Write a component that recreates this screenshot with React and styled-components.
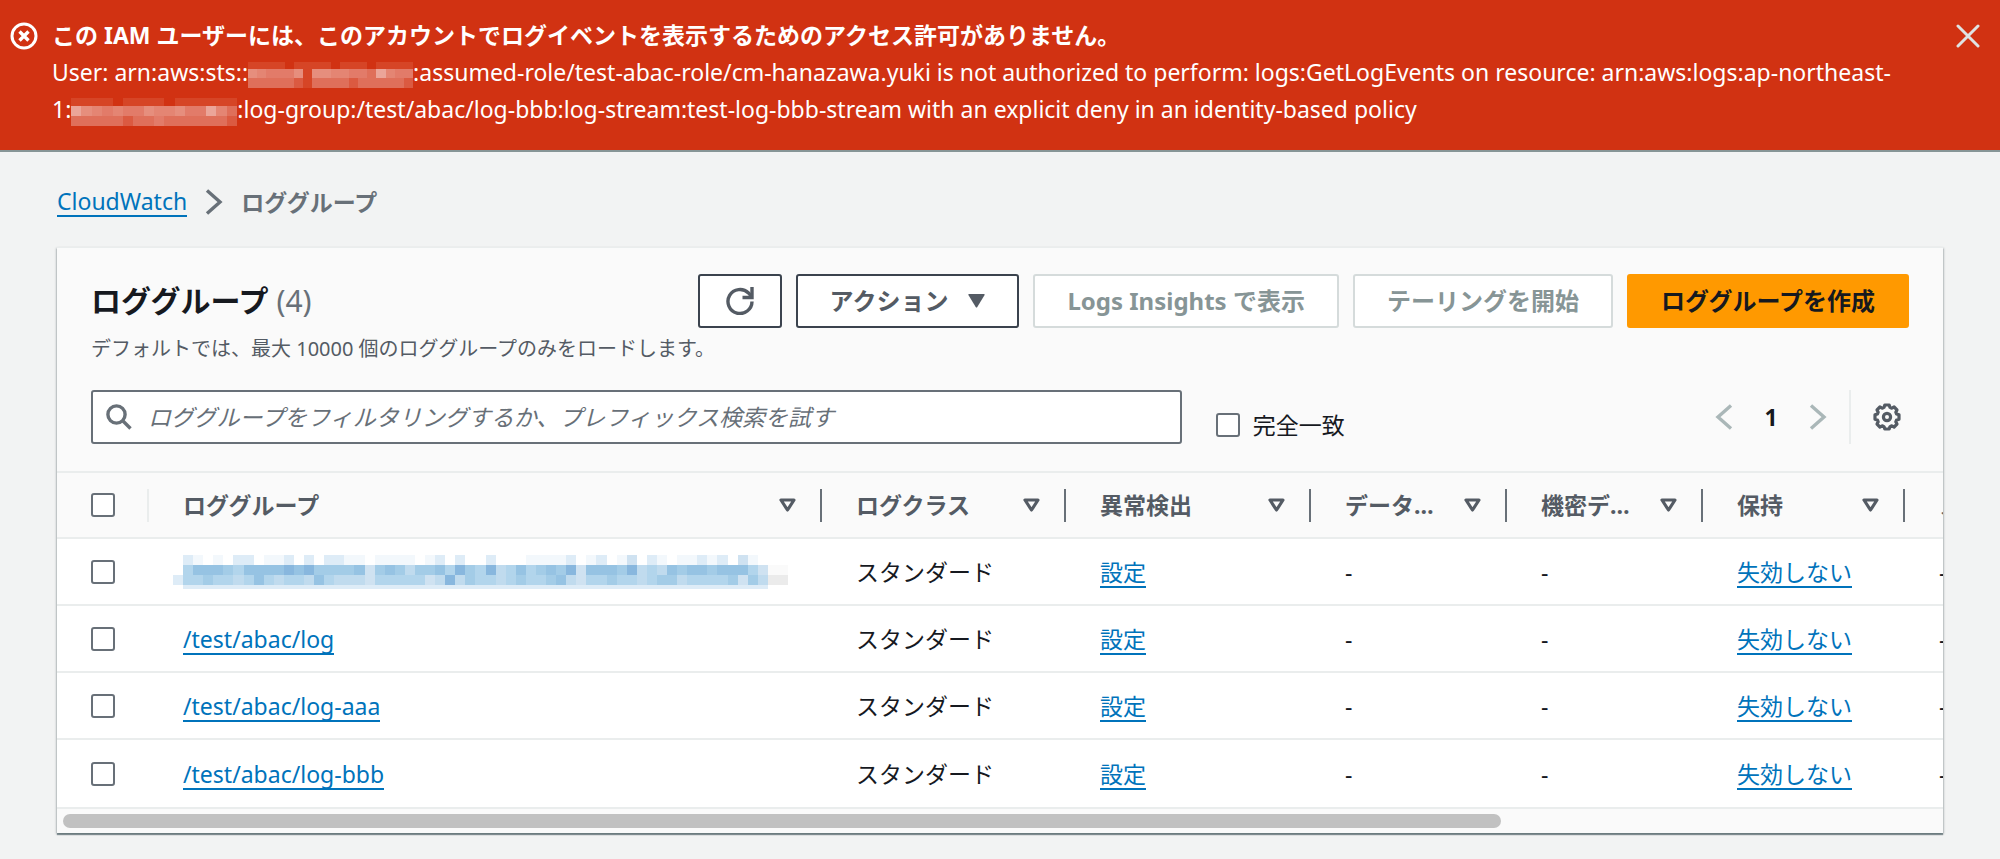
import React from "react";
import styled, { createGlobalStyle } from "styled-components";

const GlobalStyle = createGlobalStyle`
  * {
    box-sizing: border-box;
  }
  body {
    margin: 0;
    background: #f2f3f3;
    color: #16191f;
    font-family: "Noto Sans", "Noto Sans CJK JP", sans-serif;
    font-size: 23px;
    line-height: 36px;
  }
  button, input {
    font: inherit;
    color: inherit;
  }
  button {
    cursor: pointer;
  }
  svg {
    display: block;
    flex: none;
  }
`;

const Banner = styled.div`
  display: flex;
  align-items: flex-start;
  padding: 17px 8px 22px 10px;
  background: #d13212;
  color: #fff;
  line-height: 37px;
  border-bottom: 2px solid #879596;
`;

const BannerIcon = styled.div`
  display: flex;
  align-items: center;
  width: 42px;
  height: 37px;
`;

const BannerText = styled.div`
  flex: 1;
  padding-right: 30px;

  h2 {
    margin: 0;
    font-size: 23px;
    line-height: 37px;
    font-weight: 700;
  }
  p {
    margin: 0;
  }
  svg {
    display: inline-block;
    vertical-align: middle;
  }
`;

const IconButton = styled.button`
  display: flex;
  align-items: center;
  justify-content: center;
  width: ${(p) => p.$width || 48}px;
  height: ${(p) => p.$height || 37}px;
  padding: 0;
  border: none;
  background: none;
  color: ${(p) => p.$color || "#545b64"};
`;

const Page = styled.main`
  padding: 32px 57px 26px;
`;

const Breadcrumbs = styled.nav`
  display: flex;
  align-items: center;
  height: 36px;
  margin-bottom: 27px;
  gap: 18px;
  color: #687078;
`;

const Current = styled.span`
  font-weight: 700;
`;

const Link = styled.a`
  display: inline-block;
  line-height: 28px;
  color: #0073bb;
  text-decoration: none;
  border-bottom: 2px solid #0073bb;
`;

const Card = styled.section`
  background: #fafafa;
  border-top: 1px solid #eaeded;
  box-shadow: 0 2px 1px rgba(0, 28, 36, 0.4), 1px 1px 2px rgba(0, 28, 36, 0.2),
    -1px 1px 2px rgba(0, 28, 36, 0.2);
`;

const CardHeader = styled.header`
  padding: 26px 34px 27px;
`;

const TitleRow = styled.div`
  display: flex;
  justify-content: space-between;
  align-items: center;
`;

const Title = styled.h1`
  margin: 0;
  font-size: 30px;
  line-height: 52px;
  font-weight: 700;

  span {
    color: #687078;
    font-weight: 400;
  }
`;

const Actions = styled.div`
  display: flex;
  gap: 14px;
`;

const Button = styled.button`
  display: flex;
  align-items: center;
  gap: 20px;
  height: 54px;
  padding: 0 32px;
  border: 2px solid ${(p) => (p.$primary ? "#ff9900" : "#3b434e")};
  border-radius: 3px;
  background: ${(p) => (p.$primary ? "#ff9900" : "#fff")};
  color: ${(p) => (p.$primary ? "#16191f" : "#545b64")};
  font-size: 24px;
  font-weight: 700;
  white-space: nowrap;

  &:disabled {
    border-color: #d5dbdb;
    color: #879596;
    cursor: default;
  }
`;

const RefreshButton = styled(Button)`
  padding: 0 26px;
`;

const Description = styled.p`
  margin: 5px 0 25px;
  font-size: 20px;
  line-height: 32px;
  color: #545b64;
`;

const FilterRow = styled.div`
  display: flex;
  align-items: center;
`;

const SearchBox = styled.label`
  display: flex;
  align-items: center;
  gap: 16px;
  width: 60%;
  height: 54px;
  padding: 0 13px;
  border: 2px solid #687078;
  border-radius: 3px;
  background: #fff;
  color: #687078;
`;

const SearchInput = styled.input`
  flex: 1;
  min-width: 0;
  padding: 0;
  border: none;
  outline: none;
  background: none;

  &::placeholder {
    color: #687078;
    font-style: italic;
    opacity: 1;
  }
`;

const Checkbox = styled.input.attrs({ type: "checkbox" })`
  appearance: none;
  display: block;
  flex: none;
  width: 24px;
  height: 24px;
  margin: 0;
  border: 2px solid #687078;
  border-radius: 3px;
  background: #fff;
`;

const ExactMatch = styled.label`
  display: flex;
  align-items: center;
  gap: 13px;
  padding-top: 16px;
  margin-left: 34px;
`;

const Pager = styled.div`
  display: flex;
  align-items: center;
  margin-left: auto;
`;

const PageNumber = styled.button`
  width: 46px;
  padding: 0;
  border: none;
  background: none;
  font-weight: 700;
`;

const Settings = styled.div`
  display: flex;
  justify-content: flex-end;
  align-items: center;
  height: 54px;
  margin-left: 7px;
  padding: 0 0 0 14px;
  border-left: 2px solid #eaeded;
`;

const TableScroll = styled.div`
  overflow: hidden;
`;

const Table = styled.table`
  width: 130%;
  border-collapse: separate;
  border-spacing: 0;
  table-layout: fixed;
  border-top: 2px solid #eaeded;
`;

const Col = styled.col`
  width: ${(p) => p.$width}px;
`;

const HeadCell = styled.th`
  height: 66px;
  padding: 0;
  border-bottom: 2px solid #eaeded;
  color: #545b64;
  font-weight: 700;
  text-align: left;
`;

const HeadContent = styled.div`
  display: flex;
  align-items: center;
  height: 33px;
  padding: 0 24px 0 34px;
  border-right: 2px solid ${(p) => p.$line || "#687078"};

  span {
    flex: 1;
    min-width: 0;
    overflow: hidden;
    text-overflow: ellipsis;
    white-space: nowrap;
    line-height: 36px;
  }
`;

const SortButton = styled(IconButton)`
  margin-left: 20px;
`;

const Cell = styled.td`
  height: 67px;
  padding: 0 20px 0 34px;
  border-bottom: 2px solid #eaeded;
  background: #fff;
  white-space: nowrap;

  tr:last-child & {
    height: 69px;
  }
`;

const ScrollTrack = styled.div`
  padding: 5px 12px 5px 6px;
`;

const ScrollThumb = styled.div`
  width: 77%;
  height: 14px;
  border-radius: 7px;
  background: #c1c1c1;
`;

const BLUES = {
  1: "#f3f8fc",
  2: "#deecf7",
  3: "#cfe2f1",
  4: "#c0dbee",
  5: "#b2d5ec",
  6: "#a3cce7",
  7: "#96c3e3",
  8: "#88b7de",
  g: "#fafafa",
  G: "#ebebeb",
};

const WHITES = {
  1: "#d64526",
  2: "#d85030",
  3: "#db5a41",
  4: "#df6f5a",
  5: "#e27b69",
  6: "#e48573",
  7: "#e68e7d",
  8: "#eba599",
};

const NAME_MOSAIC = [
  "0210102201120202211011110120200200011112012013021011212031000",
  "05777657777878666673676466758658457567683777684547677677753gg",
  "25565545754554754443555553484655456556743556554566455556364GG",
  "0222222222222222222222222222222222222222222222222222222222200",
];

const ACCOUNT_A = ["111101111011101111", "765557177665548655", "444443144443444443"];
const ACCOUNT_B = ["1111011110111111", "8765655766755864", "4444434454444443"];

// masked identifiers, one character per block
function Mosaic({ rows, palette, width, heights }) {
  const cell = width / rows[0].length;
  const total = heights.reduce((a, b) => a + b, 0);
  let y = 0;
  return (
    <svg width={width} height={total} shapeRendering="crispEdges" aria-hidden="true">
      {rows.map((row, r) => {
        const top = y;
        y += heights[r];
        return row.split("").map((c, i) =>
          palette[c] ? (
            <rect
              key={r + "-" + i}
              x={i * cell}
              y={top}
              width={cell}
              height={heights[r]}
              fill={palette[c]}
            />
          ) : null
        );
      })}
    </svg>
  );
}

const MaskedName = styled.div`
  margin-left: -10px;
`;

const Chevron = ({ left }) => (
  <svg width="18" height="26" viewBox="0 0 18 26" fill="none" stroke="currentColor" strokeWidth="3.4">
    <path d={left ? "M16 1.5 3 13l13 11.5" : "M2 1.5 15 13 2 24.5"} />
  </svg>
);

const SortIcon = () => (
  <svg width="17" height="14" viewBox="0 0 17 14" fill="none" stroke="currentColor" strokeWidth="3.2" strokeLinejoin="round">
    <path d="M2 2h13l-6.500 10z" />
  </svg>
);

const columns = [
  { label: "ロググループ", width: 673 },
  { label: "ログクラス", width: 244 },
  { label: "異常検出", width: 245 },
  { label: "データ保護", width: 196 },
  { label: "機密データ数", width: 196 },
  { label: "保持", width: 202 },
  { label: "メトリクスフィルター" },
];

const groups = ["", "/test/abac/log", "/test/abac/log-aaa", "/test/abac/log-bbb"];

function Flash() {
  return (
    <Banner role="alert">
      <BannerIcon>
        <svg width="28" height="28" viewBox="0 0 28 28" fill="none" stroke="#fff" strokeWidth="3">
          <circle cx="14" cy="14" r="12" />
          <path d="m9.5 9.5 9 9m0-9-9 9" strokeWidth="3.4" />
        </svg>
      </BannerIcon>
      <BannerText>
        <h2>この IAM ユーザーには、このアカウントでログイベントを表示するためのアクセス許可がありません。</h2>
        <p>
          User: arn:aws:sts::
          <Mosaic rows={ACCOUNT_A} palette={WHITES} width={165} heights={[7, 9, 10]} />
          :assumed-role/test-abac-role/cm-hanazawa.yuki is not authorized to perform: logs:GetLogEvents on
          resource: arn:aws:logs:ap-northeast-
          <br />
          1:
          <Mosaic rows={ACCOUNT_B} palette={WHITES} width={166} heights={[8, 10, 10]} />
          :log-group:/test/abac/log-bbb:log-stream:test-log-bbb-stream with an explicit deny in an
          identity-based policy
        </p>
      </BannerText>
      <IconButton aria-label="閉じる" $color="#dfe3e3">
        <svg width="24" height="24" viewBox="0 0 24 24" fill="none" stroke="currentColor" strokeWidth="3" strokeLinecap="round">
          <path d="m2 2 20 20M22 2 2 22" />
        </svg>
      </IconButton>
    </Banner>
  );
}

function LogTable() {
  return (
    <TableScroll>
      <Table>
        <colgroup>
          <Col $width={92} />
          {columns.map((c) => (c.width ? <Col key={c.label} $width={c.width} /> : <col key={c.label} />))}
        </colgroup>
        <thead>
          <tr>
            <HeadCell>
              <HeadContent $line="#eaeded">
                <Checkbox aria-label="すべて選択" />
              </HeadContent>
            </HeadCell>
            {columns.map((c) => (
              <HeadCell key={c.label}>
                <HeadContent>
                  <span>{c.label}</span>
                  <SortButton $width={17} $height={33} aria-label="並べ替え">
                    <SortIcon />
                  </SortButton>
                </HeadContent>
              </HeadCell>
            ))}
          </tr>
        </thead>
        <tbody>
          {groups.map((name, i) => (
            <tr key={i}>
              <Cell>
                <Checkbox aria-label={name || "ロググループ"} />
              </Cell>
              <Cell>
                {name ? (
                  <Link href="#">{name}</Link>
                ) : (
                  <MaskedName>
                    <Mosaic rows={NAME_MOSAIC} palette={BLUES} width={615} heights={[10, 10, 10, 4]} />
                  </MaskedName>
                )}
              </Cell>
              <Cell>スタンダード</Cell>
              <Cell>
                <Link href="#">設定</Link>
              </Cell>
              <Cell>-</Cell>
              <Cell>-</Cell>
              <Cell>
                <Link href="#">失効しない</Link>
              </Cell>
              <Cell>-</Cell>
            </tr>
          ))}
        </tbody>
      </Table>
      <ScrollTrack>
        <ScrollThumb />
      </ScrollTrack>
    </TableScroll>
  );
}

export default function App() {
  return (
    <>
      <GlobalStyle />
      <Flash />
      <Page lang="ja">
        <Breadcrumbs>
          <Link href="#">CloudWatch</Link>
          <Chevron />
          <Current>ロググループ</Current>
        </Breadcrumbs>
        <Card>
          <CardHeader>
            <TitleRow>
              <Title>
                ロググループ <span>(4)</span>
              </Title>
              <Actions>
                <RefreshButton aria-label="更新">
                  <svg width="28" height="28" viewBox="0 0 28 28" fill="none" stroke="currentColor" strokeWidth="3.4">
                    <path d="M26 14.5A12 12 0 1 1 22.5 6l3 3.5" />
                    <path d="M26 0v10.5H16.5" />
                  </svg>
                </RefreshButton>
                <Button>
                  アクション
                  <svg width="17" height="14" viewBox="0 0 17 14" fill="currentColor">
                    <path d="M1 0h15q1 0 .6 1L9.3 13q-.8 1-1.6 0L.4 1Q0 0 1 0z" />
                  </svg>
                </Button>
                <Button disabled>Logs Insights で表示</Button>
                <Button disabled>テーリングを開始</Button>
                <Button $primary>ロググループを作成</Button>
              </Actions>
            </TitleRow>
            <Description>デフォルトでは、最大 10000 個のロググループのみをロードします。</Description>
            <FilterRow>
              <SearchBox>
                <svg width="26" height="26" viewBox="0 0 26 26" fill="none" stroke="currentColor" strokeWidth="3.4">
                  <circle cx="10.5" cy="10.5" r="8.6" />
                  <path d="m16.5 16.5 8 8" />
                </svg>
                <SearchInput
                  aria-label="ロググループを検索"
                  placeholder="ロググループをフィルタリングするか、プレフィックス検索を試す"
                />
              </SearchBox>
              <ExactMatch>
                <Checkbox />
                完全一致
              </ExactMatch>
              <Pager>
                <IconButton $color="#aab7b8" aria-label="前へ">
                  <Chevron left />
                </IconButton>
                <PageNumber>1</PageNumber>
                <IconButton $color="#aab7b8" aria-label="次へ">
                  <Chevron />
                </IconButton>
                <Settings>
                  <IconButton $width={44} aria-label="設定">
                    <svg width="28" height="28" viewBox="0 0 28 28" fill="none" stroke="currentColor" strokeWidth="3.2" strokeLinejoin="round">
                      <path d="M11.8 2h4.4l.8 2.400 1.800.8 2.300-1.200 2.900 2.900-1.200 2.300.8 1.800 2.400.8v4.400l-2.400.8-.8 1.800 1.200 2.300-2.900 2.900-2.300-1.200-1.800.8-.8 2.400h-4.400l-.8-2.400-1.800-.8-2.300 1.200L4 21.100l1.200-2.300-.8-1.800L2 16.200v-4.400l2.400-.8.8-1.800L4 6.900 6.900 4l2.300 1.200 1.800-.8z" />
                      <circle cx="14" cy="14" r="3.600" />
                    </svg>
                  </IconButton>
                </Settings>
              </Pager>
            </FilterRow>
          </CardHeader>
          <LogTable />
        </Card>
      </Page>
    </>
  );
}
